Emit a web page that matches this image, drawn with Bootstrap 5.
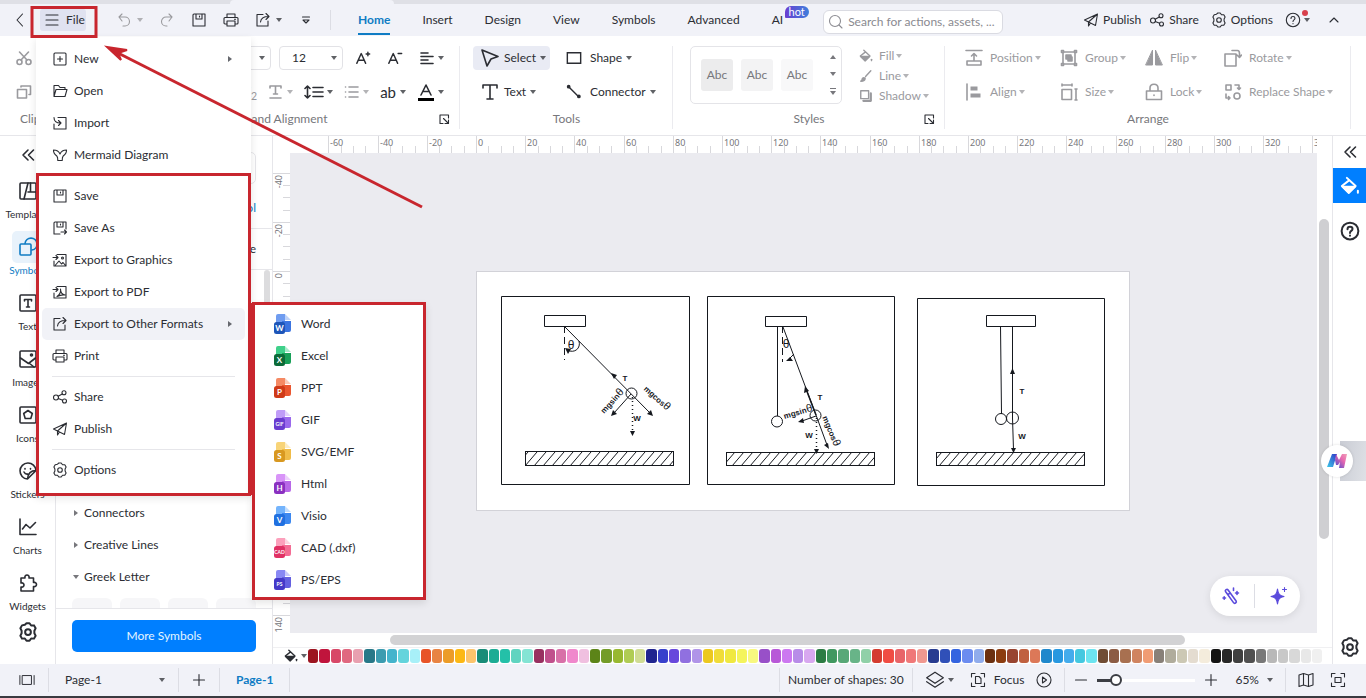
<!DOCTYPE html>
<html lang="en">
<head>
<meta charset="utf-8">
<meta name="viewport" content="width=device-width, initial-scale=1">
<title>Diagram editor</title>
<link href="https://cdn.jsdelivr.net/npm/bootstrap@5.3.0/dist/css/bootstrap.min.css" rel="stylesheet">
<style>
:root{--ink:#2b2d33;--mute:#9a9a9e;--bar:#f1f2f8;--line:#e6e6ea;--blue:#0f7cc4;--mark:#c8262e}
body{font-family:Lato,"Noto Sans",sans-serif;font-size:12px;line-height:16px;color:var(--ink);background:#fff;overflow:hidden}
svg{display:block;flex:none}
.ic{width:16px;height:16px;fill:none;stroke:currentColor;stroke-width:1.1;stroke-linecap:round;stroke-linejoin:round}
.ic.bold{stroke-width:1.6}
.ic.big{width:20px;height:20px}
.ic.mid{width:18px;height:18px}
.tool{display:inline-flex;align-items:center;gap:8px;background:none;border:0;padding:0;color:inherit;white-space:nowrap;font-size:12px;line-height:16px}
.tool.dim,.dim{color:var(--mute)}
.drop::after{content:"";border:3px solid transparent;border-top:4px solid currentColor;border-bottom:0;opacity:.75;flex:none}
.tool.drop{gap:4px}
.tool.drop .ic{margin-right:4px}
.tool.drop.gap-0 .ic{margin-right:3px}
.tabstrip{height:4px;background:#dfe0e6}
.tabstrip span{width:164px;margin-left:230px;background:var(--bar);border-radius:4px 4px 0 0}
.menubar{height:32px;background:var(--bar);padding:0 24px 0 8px}
.back{width:24px;justify-content:center}
.filebtn{width:46px;height:22px;gap:7px;padding-left:5px;background:#e0e2f0;border-radius:3px}
.quick{gap:16px;margin-left:30px}
.quick .tool.drop{gap:5px}
.quick .tool.drop .ic{margin-right:0}
.vline{width:1px;background:#dcdde4;flex:none}
.tabs{margin-left:11px}
.tabs a{position:relative;padding:8px 16px;color:var(--ink);text-decoration:none;line-height:16px}
.tabs a.on{color:var(--blue);font-weight:700}
.tabs a.on::after{content:"";position:absolute;left:16px;right:16px;bottom:1px;height:2px;background:var(--blue)}
.hot{position:absolute;left:29px;top:2px;height:12px;width:24px;border-radius:6px 6px 6px 1px;background:linear-gradient(90deg,#6a3fd0,#3f7fdc);color:#fff;font-size:11px;line-height:11px;text-align:center}
.searchbox{width:180px;height:24px;margin-top:3px;border:1px solid #dadbe2;border-radius:6px;background:#fff;padding:0 4px;color:#8c8c92}
.searchbox input{border:0;outline:0;width:100%;min-width:0;padding:0;font-size:12px;background:none}
.searchbox input::placeholder{color:#8a8a90}
.dot{position:absolute;right:2px;top:-2px;width:6px;height:6px;border-radius:50%;background:#d8404c}
.ribbon{height:100px;border-bottom:1px solid var(--line)}
.grp{position:relative;padding-top:10px;display:flex;flex-direction:column;justify-content:space-between;padding-bottom:8px}
.grp::after{content:"";position:absolute;right:0;top:10px;bottom:6px;width:1px;background:#ebebef}
.grp h6{margin:0;font-size:12px;font-weight:400;line-height:16px;color:#77777c;text-align:center}
.launch{position:absolute;right:10px;bottom:10px}
.launch .ic{width:12px;height:12px}
.rrow{height:24px;display:flex;align-items:center}
.g-clip{width:92px;padding-left:16px}.g-clip h6{text-align:left;padding-left:4px}
.g-font{width:368px}.g-tools{width:213px}.g-styles{width:272px}.g-arr{width:406px}
.g-tools .lead-col{width:93px}
.g-tools .lead-col .ic{margin-right:1px}
.stack{display:flex;flex-direction:column;gap:10px}
.boxed{height:24px;border:1px solid #e2e2e6;border-radius:4px;padding:0 5px 0 12px;font-size:12px;color:var(--ink);display:flex;align-items:center;justify-content:space-between;background:#fff}
.sel{background:#e9ebf4;border-radius:4px;height:24px}
.gallery{width:152px;height:58px;border:1px solid #e4e4e8;border-radius:5px;padding:0 5px 0 10px}
.sty{width:32px;height:32px;border-radius:3px;background:#f3f3f4;color:#77777c;font-size:12px;display:flex;align-items:center;justify-content:center;border:0;padding:0}
.tri{border:3px solid transparent;border-top:4px solid #77777c;border-bottom:0}
.tri.up{border-top:0;border-bottom:4px solid #77777c}
.endmark{border-top:1px solid #77777c;padding-top:2px}
.arr{display:grid;grid-template-columns:95px 85px 79px 1fr;row-gap:10px;padding-left:20px}
.arr .tool{height:24px}
.arr .tool.drop,.fx .tool.drop{gap:2px}
.arr .tool .ic{width:18px;height:18px;margin-right:5px}
.rail{width:56px;border-right:1px solid var(--line)}
.rail .cell{flex:none;height:56px;width:55px;display:flex;flex-direction:column;align-items:center;padding:0;border:0;background:none;color:var(--ink);font-size:10px;line-height:14px;white-space:nowrap}
.rail .cell i{display:flex;align-items:center;justify-content:center;width:32px;height:32px;border-radius:5px;flex:none;margin-top:1px}
.rail .cell.on{color:var(--blue)}.rail .cell.on i{background:#e8f2fb}
.panel{width:217px;border-right:1px solid var(--line)}
.panel .find{height:32px;border:1px solid var(--line);border-radius:5px;margin:16px 16px 0;width:184px}
.panel .prow{height:41px;border-bottom:1px solid var(--line);padding:0 16px}
.tree{height:32px;padding-left:17px;gap:5px;display:flex;align-items:center}
.tree::before{content:"";border:3px solid transparent;border-left:4px solid #77777c;border-right:0;margin-left:1px;margin-right:1px}
.tree.open::before{border:3px solid transparent;border-top:4px solid #77777c;border-bottom:0;margin:0}
.tile{width:40px;height:10px;border-radius:6px 6px 0 0;background:#f6f6f8}
.more{height:32px;background:#007fff;color:#e4f5ff;border:0;border-radius:5px;font-size:12px}
.thumbv{width:6px;background:#dcdcde;border-radius:3px 3px 0 0}
.hr{height:17px}.vr2{width:17px}
.ruler{fill:#77777c;font:9px "Noto Sans",sans-serif;width:100%;height:100%}
.ruler path{stroke:#d8d8dc;fill:none;shape-rendering:crispEdges}
.board{background:#ebebf0;padding:118px 0 0 186px;overflow:hidden;position:relative}
.pill{position:absolute;right:17px;bottom:17px;width:90px;height:40px;border-radius:20px;background:#fff;box-shadow:0 2px 8px #00000018;color:#5b4bdc}
.pill .ic{width:20px;height:20px}
.vbar{width:15px;padding:0 2px;background:#fff}
.vbar div{margin-top:83px;height:320px;width:10px;border-radius:5px;background:#cfcfd2}
.hbar{height:15px;padding:2px 147px 0 117px;border-bottom:1px solid #f0f0f2}
.hbar div{height:10px;border-radius:5px;background:#d2d2d4}
.palette{height:16px;padding:0 10px 0 11px}
.palette .sw{flex:1 1 0;height:14px;border:0;padding:0;border-radius:3px}
.side{width:34px;border-left:1px solid var(--line);position:relative}
.side button{height:35px;width:100%;justify-content:center}
.side .on{background:#007fff;color:#fff}
.helper{position:absolute;right:0;top:305px;width:26px;height:40px;background:linear-gradient(100deg,#c9ccd4,#dfe1e6)}
.helper span{position:absolute;left:-19px;top:4px;width:32px;height:32px;border-radius:50%;background:#fff;box-shadow:0 0 3px #0002}
.helper svg{margin:8px 6px}
.status{height:32px;background:var(--bar);padding:0 20px 0 19px}
.status .vline{height:24px}
.edge{height:2px;background:#3a3a40}
.status input[type=range]{appearance:none;width:98px;height:14px;margin:0 8px;background:linear-gradient(90deg,#3c3e44 14px,#fff 14px) center/100% 3px no-repeat}
.status input[type=range]::-webkit-slider-thumb{appearance:none;width:12px;height:12px;border-radius:50%;background:#fff;border:2px solid #3c3e44}
.fmenu{position:absolute;z-index:20;left:-4px;top:28px;width:215px;height:458px;margin:0;padding:6px 0 0;background:#fff;list-style:none;box-shadow:0 3px 8px #0000001c}
.fmenu li{position:relative;padding:0 6px}
.fmenu .entry{display:flex;align-items:center;width:100%;height:32px;padding:0 13px 0 10px;gap:6px;border:0;border-radius:5px;background:none;color:var(--ink);font-size:12px;text-align:left;white-space:nowrap}
.fmenu .entry.on{background:#f1f2f7}
.fmenu .sub::after{content:"";margin-left:auto;border:3px solid transparent;border-left:4px solid #66686e;border-right:0}
.fmenu .rule{height:1px;margin:4px 16px;padding:0;background:#e6e6ea}
.fmenu .rule.clear{background:none}
.fsub{position:absolute;left:216px;top:-5px;width:174px;height:297px;margin:0;padding:5px 0 0 6px;background:#fff;list-style:none;box-shadow:0 3px 8px #0000001c}
.fmenu .fsub .entry{gap:9px}
.doc{width:18px;height:20px}
.doc text{fill:#fff;font-weight:700;font-size:8px;text-anchor:middle}
.doc text.s{font-size:5px}
.d1{--a:#6f9cf0;--b:#3b74e0;--c:#1d55b8}.d2{--a:#3fd08a;--b:#18a058;--c:#0b6a38}.d3{--a:#f58a64;--b:#ea5630;--c:#cf3a18}
.d4{--a:#c09cf8;--b:#9a68ec;--c:#6a3cd0}.d5{--a:#f8d478;--b:#f0bc48;--c:#d89820}.d6{--a:#d894f8;--b:#b868e8;--c:#8a30c0}
.d7{--a:#74b4fc;--b:#3c88f0;--c:#2070e0}.d8{--a:#fca0bc;--b:#f46c94;--c:#e03064}.d9{--a:#8888f4;--b:#6460e0;--c:#4438c8}
.notes{position:absolute;left:0;top:0;z-index:30;pointer-events:none;fill:none;stroke:var(--mark);stroke-width:3}
.sketch{fill:none;stroke:#15181e;stroke-width:1}
.sketch text{fill:#15181e;stroke:none;font:700 8px "Liberation Sans",sans-serif;text-anchor:middle}
.sketch .th{font:12px "Liberation Sans",sans-serif}
.sketch tspan{font-size:11px;font-weight:400}
.sketch .a{fill:#15181e;stroke:none}
</style>
</head>
<body>
<svg width="0" height="0" class="position-absolute" aria-hidden="true"><defs>
<symbol id="burger" viewBox="0 0 14 14"><path d="M1 2h12M1 7h12M1 12h12"/></symbol>
<symbol id="chevl" viewBox="0 0 16 16"><path d="M10.500 2 5 8l5.500 6"/></symbol>
<symbol id="chevu" viewBox="0 0 16 16"><path d="m4 10 4-4 4 4"/></symbol>
<symbol id="dchev" viewBox="0 0 16 16"><path d="M8 3 3 8l5 5M13.500 3l-5 5 5 5"/></symbol>
<symbol id="undo" viewBox="0 0 16 16"><path d="M6 2 3 5l3 4M3 5h6a4 4 0 0 1 0 9H7"/></symbol>
<symbol id="redo" viewBox="0 0 16 16"><path d="m10 2 3 3-3 4M13 5H7a4 4 0 0 0 0 9h1"/></symbol>
<symbol id="save" viewBox="0 0 16 16"><path d="M2 3a1 1 0 0 1 1-1h11v12H2zM5 2v5h6V2M8.500 4v1"/></symbol>
<symbol id="saveas" viewBox="0 0 16 16"><path d="M14 9V2H3a1 1 0 0 0-1 1v11h6M5 2v5h6V2M8.500 4v1M9 12h5.500M12.500 10l2 2-2 2"/></symbol>
<symbol id="print" viewBox="0 0 16 16"><path d="M4 5V2h8v3M4 12H2a1 1 0 0 1-1-1V6.500a1 1 0 0 1 1-1h12a1 1 0 0 1 1 1V11a1 1 0 0 1-1 1h-2M4 9h8v5H4zM11.500 7.300h1"/></symbol>
<symbol id="export" viewBox="0 0 16 16"><path d="M8 2.500H2v11.500h11V9M5.500 10c.5-4 3-5.500 8-5.500M11 1.500l3 3-3 3"/></symbol>
<symbol id="morev" viewBox="0 0 16 16"><path d="M4.500 5h7M5 8l3 3 3-3z"/></symbol>
<symbol id="search" viewBox="0 0 16 16"><circle cx="7" cy="7" r="5.500"/><path d="m11 11 3 3"/></symbol>
<symbol id="plane" viewBox="0 0 16 16"><path d="M14.500 2 1.500 8l4 2L14.500 2l-2 11.500-5-2.500M5.500 10v4l2-3z"/></symbol>
<symbol id="share" viewBox="0 0 16 16"><circle cx="4" cy="8.500" r="2.500"/><circle cx="12" cy="3.800" r="2"/><circle cx="12.500" cy="12" r="2"/><path d="m6.200 7.300 4-2.300M6.300 9.500l4.300 1.700"/></symbol>
<symbol id="gear" viewBox="0 0 16 16"><path d="M5.500 2.200 6.800 1h2.400l1.300 1.800 2.300-.1 1.300 2.300-1 2v2l1 2-1.300 2.300-2.300-.1L9.200 15H6.800l-1.300-1.800-2.300.1L1.900 11l1-2V7l-1-2 1.300-2.300z"/><circle cx="8" cy="8" r="2.300"/></symbol>
<symbol id="help" viewBox="0 0 16 16"><circle cx="8" cy="8" r="6.700"/><path d="M6 6.500c0-2.700 4-2.500 4-.2C10 8 8 7.800 8 9.500M8 11.600v.1"/></symbol>
<symbol id="new" viewBox="0 0 16 16"><rect x="2" y="2" width="12" height="12" rx="1"/><path d="M8 5.500v5M5.500 8h5"/></symbol>
<symbol id="open" viewBox="0 0 16 16"><path d="M2 13V2.500h4.500L8 4.500h5v2M2 13.500l2-7h11l-2 7z"/></symbol>
<symbol id="import" viewBox="0 0 16 16"><path d="M6 2.500h8v11.500H2V9M2 2.500c0 4 3 5.500 6.500 5.500M6.500 5.500 9 8l-2.500 2.500"/></symbol>
<symbol id="mermaid" viewBox="0 0 16 16"><path d="M1.500 3c3 0 5.500 1.500 6.500 4 1-2.500 3.500-4 6.500-4 .2 3-1.300 4.500-3.300 6-.8.700-1 1.500-1 4.500H5.800c0-3-.2-3.800-1-4.500C2.800 7.500 1.300 6 1.500 3z"/></symbol>
<symbol id="exgfx" viewBox="0 0 16 16"><path d="M5 2.500h9V14H2V9M1 5.500h5M4 3.500l2 2-2 2M3.500 13l3.500-4 2.500 3 1.500-1.500 2.500 3"/><circle cx="10.500" cy="6" r="1"/></symbol>
<symbol id="expdf" viewBox="0 0 16 16"><path d="M5 2.500h9V14H2V9M1 5.500h5M4 3.500l2 2-2 2M5 12.500c3-2 4-5 3.500-7.500 0 3.500 2 5.500 4.500 6-3-.5-6 .5-8 1.500"/></symbol>
<symbol id="cut" viewBox="0 0 16 16"><circle cx="3.500" cy="12" r="2.500"/><circle cx="12.500" cy="12" r="2.500"/><path d="m3.500 2 7.500 8M12.500 2 5 10"/></symbol>
<symbol id="copy" viewBox="0 0 16 16"><path d="M1.500 5.500h9V14h-9zM5 3V2h9.500v8.500H13"/></symbol>
<symbol id="aplus" viewBox="0 0 18 16"><path d="M2 14 7 3l5 11M4 10.500h6M12.500 3.500h4M14.500 1.500v4"/></symbol>
<symbol id="aminus" viewBox="0 0 18 16"><path d="M2 14 7 3l5 11M4 10.500h6M12.500 3h4"/></symbol>
<symbol id="left" viewBox="0 0 16 16"><path d="M2 3h7M2 6.500h12M2 10h7M2 13.500h12"/></symbol>
<symbol id="spacing" viewBox="0 0 20 16"><path d="M3.500 2v12M1 4.500 3.500 2 6 4.500M1 11.500 3.500 14 6 11.500M9 3.500h10M9 8h10M9 12.500h10"/></symbol>
<symbol id="bullets" viewBox="0 0 16 16"><path d="M1.500 3h.1M1.500 8h.1M1.500 13h.1M5 3h9M5 8h9M5 13h9"/></symbol>
<symbol id="acolor" viewBox="0 0 18 18"><path d="M4 12 9 2l5 10M6 8.500h6"/><path d="M1 16.500h16" stroke="#000" stroke-width="3" stroke-linecap="butt"/></symbol>
<symbol id="ttool" viewBox="0 0 18 18"><path d="M2 5V2h14v3M9 2v14M6 16h6"/></symbol>
<symbol id="ttool2" viewBox="0 0 16 16"><path d="M2 4V2h11v2M7.500 2v8M5.500 10h4M2 14h11"/></symbol>
<symbol id="arrow" viewBox="0 0 18 18"><path d="m1 1 16 6.500-7 2.500-4 7z"/></symbol>
<symbol id="shape" viewBox="0 0 18 18"><path d="M1.500 3h15v12h-15z" stroke-linejoin="miter"/></symbol>
<symbol id="conn" viewBox="0 0 18 18"><path d="m3 3 11 11"/><circle cx="3" cy="3" r="1.300" fill="currentColor"/><circle cx="14.500" cy="14" r="1.300" fill="currentColor"/></symbol>
<symbol id="bucket" viewBox="0 0 16 16"><path d="M5.500 1.500 12.500 8 7 13.500 1.500 8 7.500 3.300"/><path d="M2 8.500h10L7 13.500z" fill="currentColor"/><path d="M14.300 11.800v1.500"/></symbol>
<symbol id="brush" viewBox="0 0 16 16"><path d="m13.500 2-6 6.500M2 14c3 0 5-.5 5-3.500-2.500-1.500-3.500.5-3.500 1.500S3 13.500 2 14z" fill="currentColor"/></symbol>
<symbol id="shadow" viewBox="0 0 16 16"><path d="M2 2h9v9H2z"/><path d="M5 13.500h8.500V5" stroke-width="2.500"/></symbol>
<symbol id="posn" viewBox="0 0 18 18"><path d="M1 1.500h16M9 12V5M6.500 7 9 4.500 11.500 7M2 12v4h14v-4z"/></symbol>
<symbol id="group" viewBox="0 0 18 18"><path d="M3 3h12v12H3z"/><path d="M1.500 1.500h2v2h-2zM14.500 1.500h2v2h-2zM1.500 14.500h2v2h-2zM14.500 14.500h2v2h-2z" /><path d="M6 6h5v4H6zM8 8h4v4H8z" fill="currentColor"/></symbol>
<symbol id="flip" viewBox="0 0 18 18"><path d="M7.500 1.500V16H1zM10.500 1.500V16H17z" fill="currentColor" stroke-width="1"/></symbol>
<symbol id="rotate" viewBox="0 0 18 18"><path d="M1 5h11v12H1zM8 1.500h5.500c1.500 0 2 1 2 3v3M13 6l2.500 2.500L17.500 6"/></symbol>
<symbol id="align" viewBox="0 0 18 18"><path d="M2 1v16"/><path d="M5.500 5.500h7M5.500 12.500h10" stroke-width="4" stroke-linecap="butt"/></symbol>
<symbol id="size" viewBox="0 0 18 18"><path d="M2 6.500h9.500v10H2zM2 2h10M2 1v2M12 1v2M16 6v11M15 6h2M15 17h2"/></symbol>
<symbol id="lock" viewBox="0 0 18 18"><path d="M1.500 8h15v8.500h-15zM5 8V5c0-5 8-5 8 0v3M9 12v.5"/></symbol>
<symbol id="replace" viewBox="0 0 18 18"><path d="M2 2h5v5H2zM11 2h4v4M13.500 5 15 6.500 16.500 5M2 11v4h4M4.500 13.500 6 15l-1.500 1.500"/><circle cx="13" cy="13" r="3"/></symbol>
<symbol id="launch" viewBox="0 0 12 12"><path d="M5 10.500H2V2h8.500v3M5.500 5.500l5 5M10.500 7v3.500H7"/></symbol>
<symbol id="templ" viewBox="0 0 20 20"><rect x="2" y="2" width="16" height="16" rx="1"/><path d="M10 2 6 18M10 11h8M12.500 2v9"/></symbol>
<symbol id="symb" viewBox="0 0 20 20"><rect x="2" y="7" width="11" height="11" rx="1"/><path d="M7 6.500A6 6 0 1 1 14 13"/></symbol>
<symbol id="textb" viewBox="0 0 20 20"><rect x="2" y="2" width="16" height="16" rx="1"/><path d="M6.500 8V6.500h7V8M10 6.500V14M8.500 14h3"/></symbol>
<symbol id="image" viewBox="0 0 20 20"><rect x="2" y="2" width="16" height="16" rx="1"/><path d="m2.500 9 8 5.500L17.500 9M11 14l5 4"/><circle cx="13.500" cy="6" r="1"/></symbol>
<symbol id="iconb" viewBox="0 0 20 20"><rect x="2" y="2" width="16" height="16" rx="1"/><path d="m10 5.500 4.300 3-1.500 5H7.200l-1.500-5z"/></symbol>
<symbol id="sticker" viewBox="0 0 20 20"><path d="M18 9.500A8 8 0 1 0 9.500 18zM18 9.500c-5 0-8 3-8.500 8.500M7 7.500v.6M12.500 7.500v.6M6 11c1 2 2.500 2.300 4 2"/></symbol>
<symbol id="chart" viewBox="0 0 20 20"><path d="M2 2v15.500h16M4.500 12 8 7.500l4 3.500 5.500-5.500"/></symbol>
<symbol id="widget" viewBox="0 0 20 20"><path d="M3 5h4c-1-4 5-4 4 0h4.500v4.500c4-1 4 5 0 4V18H3v-4c4 1 4-5 0-4z"/></symbol>
<symbol id="present" viewBox="0 0 18 16"><path d="M1 3v10M17 3v10M4 3h10v10H4z" stroke-linejoin="miter"/></symbol>
<symbol id="plus" viewBox="0 0 16 16"><path d="M2.500 8h11M8 2.500v11"/></symbol>
<symbol id="minus" viewBox="0 0 16 16"><path d="M2.500 8h11"/></symbol>
<symbol id="layers" viewBox="0 0 18 18"><path d="m9 2 7.500 5L9 12 1.500 7zM1.500 10.500 9 15.500l7.500-5"/></symbol>
<symbol id="focus" viewBox="0 0 16 16"><path d="M5 1.500H1.500V5M11 1.500h3.500V5M5 14.500H1.500V11M11 14.500h3.500V11M5.500 4.500h3.500L11 6.500v5H5.500z"/></symbol>
<symbol id="play" viewBox="0 0 16 16"><circle cx="8" cy="8" r="7"/><path d="m6.500 5 4 3-4 3z"/></symbol>
<symbol id="map" viewBox="0 0 16 16"><path d="m1 3 4.500-1.500L10.500 3 15 1.500v11.500L10.500 14.500l-5-1.500L1 14.500zM5.500 1.500V13M10.500 3v11.500"/></symbol>
<symbol id="fit" viewBox="0 0 16 16"><path d="M5 1.500H1.500V5M11 1.500h3.500V5M5 14.500H1.500V11M11 14.500h3.500V11M5 5.500h6v5H5z"/></symbol>
<symbol id="wand" viewBox="0 0 20 20"><path d="M4.500 5.500c-.8-1.500 1.500-3 2.600-1.500l8 11c1 1.700-1.500 3.200-2.600 1.600zM7 8.500l2-1.300M12.500 2v2.500M16 5.500v3M14.500 7h3M2 12h2.500M3.200 10.800v2.500"/></symbol>
<symbol id="spark" viewBox="0 0 20 20"><path d="M8.500 3c.7 5 2 6.500 6.500 7.500-4.500 1-5.800 2.500-6.500 7.500-.7-5-2-6.500-6.500-7.500 4.500-1 5.800-2.500 6.500-7.500z" fill="currentColor"/><path d="M15.500 1.500v4M13.500 3.500h4"/></symbol>
<symbol id="doc" viewBox="0 0 18 20"><path d="M4 0h7v18H2V2a2 2 0 0 1 2-2z" fill="var(--a)"/><path d="M8 7h9v9a2 2 0 0 1-2 2H8z" fill="var(--b)"/><path d="M11 0l6 6h-6z" fill="var(--a)" opacity=".45"/><rect y="8" width="11" height="12" rx="2.500" fill="var(--c)"/></symbol>
<pattern id="hatch" width="9" height="14" patternUnits="userSpaceOnUse" x="526" y="452"><path d="M-1 14 11 0M-10 14 2 0M8 14 20 0" stroke="#15181e" fill="none"/></pattern>
</defs></svg>

<div class="d-flex flex-column vh-100 position-relative">
<div class="tabstrip d-flex flex-shrink-0"><span></span></div>

<header class="menubar d-flex align-items-center flex-shrink-0">
  <button class="tool back" aria-label="Back"><svg class="ic"><use href="#chevl"/></svg></button>
  <div class="position-relative ms-2 d-flex">
    <button class="tool filebtn"><svg class="ic" style="width:14px;height:14px"><use href="#burger"/></svg>File</button>
    <ul class="fmenu">
      <li><button class="entry sub"><svg class="ic"><use href="#new"/></svg>New</button></li>
      <li><button class="entry"><svg class="ic"><use href="#open"/></svg>Open</button></li>
      <li><button class="entry"><svg class="ic"><use href="#import"/></svg>Import</button></li>
      <li><button class="entry"><svg class="ic"><use href="#mermaid"/></svg>Mermaid Diagram</button></li>
      <li class="rule clear"></li>
      <li><button class="entry"><svg class="ic"><use href="#save"/></svg>Save</button></li>
      <li><button class="entry"><svg class="ic"><use href="#saveas"/></svg>Save As</button></li>
      <li><button class="entry"><svg class="ic"><use href="#exgfx"/></svg>Export to Graphics</button></li>
      <li><button class="entry"><svg class="ic"><use href="#expdf"/></svg>Export to PDF</button></li>
      <li><button class="entry sub on"><svg class="ic"><use href="#export"/></svg>Export to Other Formats</button>
        <ul class="fsub">
          <li><button class="entry"><svg class="doc d1"><use href="#doc"/><text x="5.500" y="17">W</text></svg>Word</button></li>
          <li><button class="entry"><svg class="doc d2"><use href="#doc"/><text x="5.500" y="17">X</text></svg>Excel</button></li>
          <li><button class="entry"><svg class="doc d3"><use href="#doc"/><text x="5.500" y="17">P</text></svg>PPT</button></li>
          <li><button class="entry"><svg class="doc d4"><use href="#doc"/><text class="s" x="5.500" y="16">GIF</text></svg>GIF</button></li>
          <li><button class="entry"><svg class="doc d5"><use href="#doc"/><text x="5.500" y="17">S</text></svg>SVG/EMF</button></li>
          <li><button class="entry"><svg class="doc d6"><use href="#doc"/><text x="5.500" y="17">H</text></svg>Html</button></li>
          <li><button class="entry"><svg class="doc d7"><use href="#doc"/><text x="5.500" y="17">V</text></svg>Visio</button></li>
          <li><button class="entry"><svg class="doc d8"><use href="#doc"/><text class="s" x="5.500" y="16">CAD</text></svg>CAD (.dxf)</button></li>
          <li><button class="entry"><svg class="doc d9"><use href="#doc"/><text class="s" x="5.500" y="16">PS</text></svg>PS/EPS</button></li>
        </ul></li>
      <li><button class="entry"><svg class="ic"><use href="#print"/></svg>Print</button></li>
      <li class="rule"></li>
      <li><button class="entry"><svg class="ic"><use href="#share"/></svg>Share</button></li>
      <li><button class="entry"><svg class="ic"><use href="#plane"/></svg>Publish</button></li>
      <li class="rule"></li>
      <li><button class="entry"><svg class="ic"><use href="#gear"/></svg>Options</button></li>
    </ul>
  </div>
  <div class="quick d-flex align-items-center">
    <button class="tool drop dim" aria-label="Undo"><svg class="ic"><use href="#undo"/></svg></button>
    <button class="tool dim" aria-label="Redo"><svg class="ic"><use href="#redo"/></svg></button>
    <button class="tool" aria-label="Save"><svg class="ic"><use href="#save"/></svg></button>
    <button class="tool" aria-label="Print"><svg class="ic"><use href="#print"/></svg></button>
    <button class="tool drop" aria-label="Export"><svg class="ic"><use href="#export"/></svg></button>
    <button class="tool" aria-label="More"><svg class="ic"><use href="#morev"/></svg></button>
    <span class="vline" style="height:20px"></span>
  </div>
  <nav class="tabs d-flex">
    <a class="on" href="#">Home</a><a href="#">Insert</a><a href="#">Design</a><a href="#">View</a><a href="#">Symbols</a><a href="#">Advanced</a><a href="#">AI<span class="hot">hot</span></a>
  </nav>
  <label class="searchbox d-flex align-items-center gap-1 ms-4"><svg class="ic"><use href="#search"/></svg><input type="text" placeholder="Search for actions, assets, ..." aria-label="Search"></label>
  <div class="d-flex align-items-center ms-auto gap-2">
    <button class="tool gap-1"><svg class="ic"><use href="#plane"/></svg>Publish</button>
    <button class="tool gap-1"><svg class="ic"><use href="#share"/></svg>Share</button>
    <button class="tool gap-1 ms-1"><svg class="ic"><use href="#gear"/></svg>Options</button>
    <button class="tool drop gap-0 position-relative ms-1" aria-label="Help"><svg class="ic"><use href="#help"/></svg><span class="dot"></span></button>
    <button class="tool ms-2" aria-label="Collapse"><svg class="ic"><use href="#chevu"/></svg></button>
  </div>
</header>

<section class="ribbon d-flex flex-shrink-0">
  <div class="grp g-clip">
    <div class="stack dim"><div class="rrow"><svg class="ic bold"><use href="#cut"/></svg></div><div class="rrow"><svg class="ic bold"><use href="#copy"/></svg></div></div>
    <h6>Clipboard</h6>
  </div>
  <div class="grp g-font">
    <div class="stack">
      <div class="rrow justify-content-end" style="padding-right:16px">
        <button class="boxed drop me-2" style="width:130px" aria-label="Font"><span></span></button>
        <button class="boxed drop me-2" style="width:64px">12</button>
        <button class="tool me-3 ms-1" aria-label="Larger"><svg class="ic bold"><use href="#aplus"/></svg></button>
        <button class="tool me-3" aria-label="Smaller"><svg class="ic bold"><use href="#aminus"/></svg></button>
        <button class="tool drop gap-0" aria-label="Align"><svg class="ic bold"><use href="#left"/></svg></button>
      </div>
      <div class="rrow justify-content-end" style="padding-right:16px;gap:11px">
        <span class="dim" style="font-size:14px">X<sub>2</sub></span>
        <button class="tool drop dim gap-0" aria-label="Text style"><svg class="ic bold"><use href="#ttool2"/></svg></button>
        <button class="tool drop gap-0" aria-label="Line spacing"><svg class="ic bold big"><use href="#spacing"/></svg></button>
        <button class="tool drop dim gap-0" aria-label="List"><svg class="ic bold"><use href="#bullets"/></svg></button>
        <button class="tool drop" style="font-size:15px">ab</button>
        <button class="tool drop gap-0" aria-label="Font colour"><svg class="ic bold mid"><use href="#acolor"/></svg></button>
      </div>
    </div>
    <h6>Font and Alignment</h6><button class="tool launch" aria-label="Font settings"><svg class="ic"><use href="#launch"/></svg></button>
  </div>
  <div class="grp g-tools">
    <div class="d-flex" style="padding-left:13px">
      <div class="stack lead-col">
        <button class="tool drop sel align-self-start ps-2 pe-1"><svg class="ic bold mid"><use href="#arrow"/></svg>Select</button>
        <button class="tool drop rrow ps-2"><svg class="ic bold mid"><use href="#ttool"/></svg>Text</button>
      </div>
      <div class="stack">
        <button class="tool drop rrow"><svg class="ic bold"><use href="#shape"/></svg>Shape</button>
        <button class="tool drop rrow"><svg class="ic bold"><use href="#conn"/></svg>Connector</button>
      </div>
    </div>
    <h6>Tools</h6>
  </div>
  <div class="grp g-styles">
    <div class="d-flex" style="padding-left:17px">
      <div class="gallery d-flex align-items-center gap-2">
        <button class="sty" style="background:#ececed">Abc</button><button class="sty">Abc</button><button class="sty" style="background:#f8f8f9">Abc</button>
        <div class="d-flex flex-column justify-content-between align-self-stretch ms-auto py-2"><span class="tri up"></span><span class="tri"></span><span class="endmark"><span class="tri d-block"></span></span></div>
      </div>
      <div class="fx d-flex flex-column dim" style="gap:4px;padding-left:17px;padding-top:2px">
        <button class="tool drop dim"><svg class="ic bold" style="width:14px"><use href="#bucket"/></svg>Fill</button>
        <button class="tool drop dim"><svg class="ic bold" style="width:14px"><use href="#brush"/></svg>Line</button>
        <button class="tool drop dim"><svg class="ic bold" style="width:14px"><use href="#shadow"/></svg>Shadow</button>
      </div>
    </div>
    <h6>Styles</h6><button class="tool launch" aria-label="Style settings"><svg class="ic"><use href="#launch"/></svg></button>
  </div>
  <div class="grp g-arr">
    <div class="arr">
      <button class="tool drop dim"><svg class="ic bold"><use href="#posn"/></svg>Position</button>
      <button class="tool drop dim"><svg class="ic bold"><use href="#group"/></svg>Group</button>
      <button class="tool drop dim"><svg class="ic bold"><use href="#flip"/></svg>Flip</button>
      <button class="tool drop dim"><svg class="ic bold"><use href="#rotate"/></svg>Rotate</button>
      <button class="tool drop dim"><svg class="ic bold"><use href="#align"/></svg>Align</button>
      <button class="tool drop dim"><svg class="ic bold"><use href="#size"/></svg>Size</button>
      <button class="tool drop dim"><svg class="ic bold"><use href="#lock"/></svg>Lock</button>
      <button class="tool drop dim"><svg class="ic bold"><use href="#replace"/></svg>Replace Shape</button>
    </div>
    <h6>Arrange</h6>
  </div>
</section>

<main class="d-flex" style="min-height:0;flex:1 1 0">
  <aside class="rail d-flex flex-column overflow-hidden flex-shrink-0">
    <div class="d-flex align-items-center justify-content-center flex-shrink-0" style="height:38px"><svg class="ic bold"><use href="#dchev"/></svg></div>
    <button class="cell"><i><svg class="ic bold big"><use href="#templ"/></svg></i>Templates</button>
    <button class="cell on"><i><svg class="ic bold big"><use href="#symb"/></svg></i>Symbols</button>
    <button class="cell"><i><svg class="ic bold big"><use href="#textb"/></svg></i>Text</button>
    <button class="cell"><i><svg class="ic bold big"><use href="#image"/></svg></i>Images</button>
    <button class="cell"><i><svg class="ic bold big"><use href="#iconb"/></svg></i>Icons</button>
    <button class="cell"><i><svg class="ic bold big"><use href="#sticker"/></svg></i>Stickers</button>
    <button class="cell"><i><svg class="ic bold big"><use href="#chart"/></svg></i>Charts</button>
    <button class="cell"><i><svg class="ic bold big"><use href="#widget"/></svg></i>Widgets</button>
    <button class="cell" style="height:28px" aria-label="Settings"><svg class="ic bold big"><use href="#gear"/></svg></button>
  </aside>
  <aside class="panel d-flex flex-column flex-shrink-0">
    <input class="find" type="text" aria-label="Find symbols">
    <div class="prow d-flex align-items-center justify-content-end pt-1" style="height:45px;color:var(--blue)">Symbol</div>
    <div class="prow d-flex align-items-center justify-content-end">More</div>
    <div class="d-flex flex-grow-1 justify-content-end overflow-hidden" style="padding-right:2px"><span class="thumbv"></span></div>
    <div class="tree">Connectors</div>
    <div class="tree">Creative Lines</div>
    <div class="tree open">Greek Letter</div>
    <div class="d-flex gap-2 px-3" style="padding-top:5px;border-bottom:1px solid var(--line)"><span class="tile"></span><span class="tile"></span><span class="tile"></span><span class="tile"></span></div>
    <div class="px-3 pb-2 d-flex flex-column" style="padding-top:11px;height:55px"><button class="more">More Symbols</button></div>
  </aside>

  <section class="flex-grow-1 d-flex flex-column" style="min-width:0">
    <div class="d-flex flex-grow-1" style="min-height:0">
      <div class="vr2 flex-shrink-0 pt-3 overflow-hidden"><svg class="ruler" id="rv"></svg></div>
      <div class="flex-grow-1 d-flex flex-column" style="min-width:0">
        <div class="hr overflow-hidden flex-shrink-0"><svg class="ruler" id="rh"></svg></div>
        <div class="board flex-grow-1">
          <svg class="sketch" width="654" height="240" viewBox="476 271 654 240">
            <rect x="476.500" y="271.500" width="653" height="239" fill="#fff" stroke="#d2d2d8"/>
            <path d="M501.500 296.500h188v188h-188zM707.500 296.500h187v188h-187zM917.500 298.500h187v187h-187zM544.500 315.500h41v11h-41zM765.500 316.500h41v10h-41zM986.500 315.500h49v11h-49z"/>
            <rect x="525.500" y="451.500" width="148" height="14" fill="url(#hatch)"/>
            <rect x="726.500" y="452.500" width="148" height="13" fill="url(#hatch)"/>
            <rect x="936.500" y="452.500" width="148" height="13" fill="url(#hatch)"/>
            <path d="M564.500 326v34M782.500 326v36" stroke-dasharray="7 4"/>
            <path d="M565 327 651 414M631 394l-17 19M579 341c2 7-4 13-12 9"/>
            <path d="M632.500 397v34M816.500 418v32" stroke-dasharray="1 3" stroke-width="1.500"/>
            <circle cx="631.500" cy="393.500" r="5.500"/>
            <g class="a"><path d="m611 373 6 2-3 4zM611 416l2-6 4 4zM653 416l-6-2 4-4zM630 431h5l-2.500 5zM565 348l6 1-3 5z"/></g>
            <text class="th" x="571" y="349">θ</text><text x="625" y="381">T</text><text x="637" y="421">W</text>
            <text transform="translate(612 401) rotate(-47)" y="3">mgsin<tspan>θ</tspan></text><text transform="translate(657 398) rotate(42)" y="3">mgcos<tspan>θ</tspan></text>
            <path d="M777.500 326v90M783 327l33 88 11 30M816 416l-14 5M794 354l-6 6"/>
            <circle cx="777" cy="421.500" r="5.500"/><circle cx="815.500" cy="415.500" r="5.500"/>
            <path d="m806 389 10 26" stroke-width="1.500"/>
            <g class="a"><path d="m805 386 4 5-5 2zM798 422l5-4 1 5zM829 449l-5-4 4-2zM814 449h5l-2.500 5zM786 361l4-4 3 4z"/></g>
            <text class="th" x="786" y="348">θ</text><text x="820" y="400">T</text><text x="809" y="438">W</text>
            <text transform="translate(798 412) rotate(-16)" y="3">mgsin<tspan>θ</tspan></text><text transform="translate(831 431) rotate(68)" y="3">mgcos<tspan>θ</tspan></text>
            <path d="m1000.500 326 1 88M1012.500 326v92l1 32"/>
            <circle cx="1001" cy="419" r="5.500"/><circle cx="1012.500" cy="418" r="6"/>
            <g class="a"><path d="M1010 374h5l-2.500-6zM1011 448h5l-2.500 5z"/></g>
            <text x="1022" y="394">T</text><text x="1022" y="439">W</text>
          </svg>
          <div class="pill d-flex align-items-center justify-content-around px-1"><svg class="ic bold"><use href="#wand"/></svg><span class="vline" style="height:24px"></span><svg class="ic"><use href="#spark"/></svg></div>
        </div>
      </div>
      <div class="vbar flex-shrink-0"><div></div></div>
    </div>
    <div class="hbar flex-shrink-0"><div></div></div>
    <div class="d-flex palette align-items-center flex-shrink-0"><button class="tool drop gap-0" style="width:24px" aria-label="Fill colour"><svg class="ic bold" style="width:14px"><use href="#bucket"/></svg></button><div class="d-flex flex-grow-1" style="gap:1px" id="swatches"></div></div>
  </section>
  <aside class="side flex-shrink-0">
    <button class="tool" style="height:32px" aria-label="Expand"><svg class="ic bold"><use href="#dchev"/></svg></button>
    <button class="tool on" aria-label="Style"><svg class="ic bold big"><use href="#bucket"/></svg></button>
    <button class="tool" style="height:55px" aria-label="Help"><svg class="ic bold big"><use href="#help"/></svg></button>
    <div class="position-absolute bottom-0 w-100"><button class="tool" aria-label="Settings"><svg class="ic bold big"><use href="#gear"/></svg></button></div>
    <div class="helper"><span><svg width="20" height="16" viewBox="0 0 20 16"><defs><linearGradient id="lb" x1="0" y1="1" x2="1" y2="0"><stop stop-color="#3cc8e8"/><stop offset="1" stop-color="#3038c8"/></linearGradient><linearGradient id="lp" x1="0" y1="1" x2="1" y2="0"><stop stop-color="#4048d0"/><stop offset=".6" stop-color="#e868b0"/><stop offset="1" stop-color="#f0a0b8"/></linearGradient></defs><path d="M5 1h5l-4 13H0z" fill="url(#lb)"/><path d="M9 1 12 7l3-6h5l-3 14h-5l1-6-2 3H9L8 7z" fill="url(#lp)"/></svg></span></div>
  </aside>
</main>

<footer class="status d-flex align-items-center flex-shrink-0">
  <button class="tool" aria-label="Present"><svg class="ic"><use href="#present"/></svg></button>
  <span class="vline" style="margin:0 16px 0 13px"></span>
  <button class="tool drop justify-content-between" style="width:100px">Page-1</button>
  <span class="vline" style="margin:0 12px 0 13px"></span>
  <button class="tool" aria-label="Add page"><svg class="ic"><use href="#plus"/></svg></button>
  <span class="vline" style="margin:0 16px 0 12px"></span>
  <a class="fw-bold text-decoration-none" style="color:var(--blue)" href="#">Page-1</a>
  <span class="vline ms-3"></span>
  <span class="vline ms-auto"></span>
  <span class="mx-2">Number of shapes: 30</span>
  <span class="vline"></span>
  <button class="tool drop gap-0 ms-2" style="padding-left:4px" aria-label="Layers"><svg class="ic big"><use href="#layers"/></svg></button>
  <button class="tool ms-3"><svg class="ic"><use href="#focus"/></svg>Focus</button>
  <button class="tool mx-2 ps-1" aria-label="Play"><svg class="ic"><use href="#play"/></svg></button>
  <span class="vline ms-1 me-1"></span>
  <button class="tool ms-1" aria-label="Zoom out"><svg class="ic"><use href="#minus"/></svg></button>
  <input type="range" min="0" max="100" value="15" aria-label="Zoom">
  <button class="tool" aria-label="Zoom in"><svg class="ic"><use href="#plus"/></svg></button>
  <button class="tool drop gap-2 ms-3">65%</button>
  <span class="vline" style="margin:0 12px"></span>
  <button class="tool me-3" aria-label="Map"><svg class="ic"><use href="#map"/></svg></button>
  <button class="tool" aria-label="Fit"><svg class="ic"><use href="#fit"/></svg></button>
</footer>
<div class="edge flex-shrink-0"></div>

<svg class="notes" width="440" height="610">
  <path d="M32 7.500h64v29H32zM37.500 174.500h212v320h-212zM253.500 303.500h171v295h-171z"/>
  <path d="M251.500 303v192"/>
  <path d="M422 207 118 53"/><path d="m107 47 20 3-9 3 3 7z" fill="#c8262e" stroke-width="2"/>
</svg>
</div>

<script src="https://cdn.jsdelivr.net/npm/bootstrap@5.3.0/dist/js/bootstrap.bundle.min.js"></script>
<script>
const colors = ("9c1420 c0143c d84868 e06880 e8a0b0 287888 3c9cb0 44b4cc 64d4dc a8f0f8 e85428 e88444 ec9c28 fcb814 fcc46c 188c78 1cac94 24c0a8 60d4c0 84e4d4 983060 c0508c d870a8 f088cc f0c0e0 5c8418 749c28 98b830 b0cc54 d0dc94 202490 3840cc 6848dc 9070e0 b094e8 ecc820 f0dc38 f0e840 f4f45c f8f880 9850c8 b858d8 cc78f0 b88ce8 d8a8f0 2c7c44 409860 58a878 68b488 90d0a8 d43c30 f04c44 e86468 f07878 f09890 283c90 3050b8 3464e0 6c8cf0 90acec 6c3010 8c3c10 984430 c06040 dc7858 2088cc 2898e0 44acec 44c8e0 6ce4f0 704c34 8c5c44 a87050 d08460 f09c74 888078 b0ac9c ccc8b4 e4dcd0 f4ecdc 141414 282828 404040 505050 787878 b8b8b8 c8c8c8 d8d8d8 e8e8e8 f0f0f0").split(" ");
document.getElementById("swatches").innerHTML = colors.map(c => `<button class="sw" style="background:#${c}" aria-label="#${c}"></button>`).join("");

// Rulers: a labelled tick every 20 units, four minor ticks in between.
const STEP = 49.2;
function ruler(id, origin, from, to, vertical) {
  let ticks = "", labels = "";
  for (let i = from * 4; i <= to * 4; i++) {
    const p = Math.round(origin + i * STEP / 4), major = i % 4 === 0, s = major ? 0 : 10;
    ticks += vertical ? `M${s} ${p}.5H17` : `M${p}.5 ${s}V17`;
    if (major) labels += vertical
      ? `<text transform="translate(9 ${p + 2}) rotate(-90)" text-anchor="end">${i * 5}</text>`
      : `<text x="${p + 2}" y="10">${i * 5}</text>`;
  }
  document.getElementById(id).innerHTML = `<path d="${ticks}"/>` + labels;
}
ruler("rh", 186, -3, 17, false);
ruler("rv", 119, -2, 7, true);
</script>
</body>
</html>
